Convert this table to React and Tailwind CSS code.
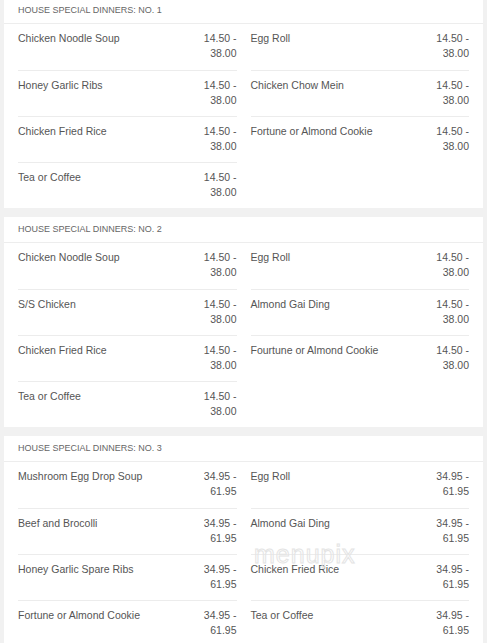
import React from "react";

const sections = [
  {
    title: "HOUSE SPECIAL DINNERS: NO. 1",
    price: ["14.50 -", "38.00"],
    items: [
      "Chicken Noodle Soup",
      "Egg Roll",
      "Honey Garlic Ribs",
      "Chicken Chow Mein",
      "Chicken Fried Rice",
      "Fortune or Almond Cookie",
      "Tea or Coffee",
    ],
  },
  {
    title: "HOUSE SPECIAL DINNERS: NO. 2",
    price: ["14.50 -", "38.00"],
    items: [
      "Chicken Noodle Soup",
      "Egg Roll",
      "S/S Chicken",
      "Almond Gai Ding",
      "Chicken Fried Rice",
      "Fourtune or Almond Cookie",
      "Tea or Coffee",
    ],
  },
  {
    title: "HOUSE SPECIAL DINNERS: NO. 3",
    price: ["34.95 -", "61.95"],
    items: [
      "Mushroom Egg Drop Soup",
      "Egg Roll",
      "Beef and Brocolli",
      "Almond Gai Ding",
      "Honey Garlic Spare Ribs",
      "Chicken Fried Rice",
      "Fortune or Almond Cookie",
      "Tea or Coffee",
    ],
  },
];

function Section({ s, first, watermark }) {
  return (
    <div className={`relative bg-white mx-[4px] ${first ? "-mt-[2px]" : "mt-[9px]"}`}>
      <div className="h-[26px] border-b border-[#ededed] px-[14px] flex items-center text-[9px] text-[#666]">
        {s.title}
      </div>
      <div className="grid grid-cols-2 gap-x-[14px] px-[14px]">
        {s.items.map((name, i) => (
          <div
            key={i}
            className={`h-[46px] flex justify-between pt-[7px] text-[10.5px] leading-[15px] text-[#555] ${
              i >= 2 ? "border-t border-[#ececec]" : ""
            }`}
          >
            <span>{name}</span>
            <span className="text-right">
              {s.price[0]}
              <br />
              {s.price[1]}
            </span>
          </div>
        ))}
      </div>
      {watermark && (
        <div className="absolute left-[250px] top-[106px] text-[25px] leading-none text-transparent [-webkit-text-stroke:1px_#e4e4e4] tracking-[1px] pointer-events-none">
          menupix
        </div>
      )}
    </div>
  );
}

export default function App() {
  return (
    <div
      className="w-[487px] h-[643px] overflow-hidden bg-[#f1f1f1]"
      style={{ fontFamily: '"Liberation Sans", Arial, sans-serif' }}
    >
      {sections.map((s, i) => (
        <Section key={i} s={s} first={i === 0} watermark={i === 2} />
      ))}
    </div>
  );
}
